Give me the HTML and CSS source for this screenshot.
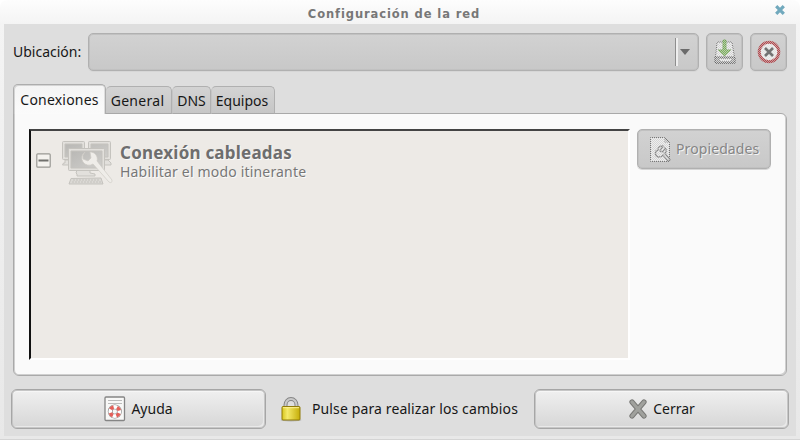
FILE: index.html
```html
<!DOCTYPE html>
<html lang="es">
<head>
<meta charset="utf-8">
<title>Configuración de la red</title>
<link rel="stylesheet" href="styles.css">
</head>
<body>
<div class="window">
  <header class="titlebar">
    <h1>Configuración de la red</h1>
    <svg class="close" width="12" height="12" viewBox="0 0 12 12"><path d="M2.2 2.2 9.8 9.8M9.8 2.2 2.2 9.8" stroke="#71a9bd" stroke-width="3.2"/></svg>
  </header>
  <main class="content">
    <div class="location">
      <label class="location-label">Ubicación:</label>
      <div class="combo"><span class="combo-sep"></span><span class="arrow"></span></div>
      <button class="tool">
        <svg width="24" height="28" viewBox="0 0 24 28">
          <defs>
            <pattern id="dots" width="2" height="2" patternUnits="userSpaceOnUse"><path d="M0 0h1v1H0zM1 1h1v1H1z" fill="#fff"/></pattern>
            <mask id="dither" maskUnits="userSpaceOnUse" x="0" y="0" width="30" height="30"><path d="M0 0h30v30H0z" fill="url(#dots)"/></mask>
            <mask id="dither-soft" maskUnits="userSpaceOnUse" x="0" y="0" width="30" height="30"><path d="M0 0h30v30H0z" fill="#fff" opacity=".35"/><path d="M0 0h30v30H0z" fill="url(#dots)"/></mask>
          </defs>
          <path d="M3 4h17l2 21H2z" fill="#ddd" opacity=".5"/>
          <g mask="url(#dither)">
            <path d="M4 4h15l2.500 15v6h-19v-6z" fill="#eee" stroke="#777"/>
            <path d="M2 19h20v6H2z" fill="#999" stroke="#555"/><path d="M7 22h11" stroke="#eee" stroke-width="2"/>
          </g>
          <g mask="url(#dither-soft)"><path d="M10 2h3v10h5l-6.500 6L5 12h5z" fill="#7fb45e" stroke="#6da14f"/></g>
        </svg>
      </button>
      <button class="tool">
        <svg width="26" height="26" viewBox="0 0 26 26">
          <circle cx="13" cy="13" r="9" fill="#ddd"/>
          <g mask="url(#dither-soft)"><circle cx="13" cy="13" r="9.800" fill="#eee" stroke="#b5484d" stroke-width="3"/></g>
          <path d="m9 9 8 8m0-8-8 8" stroke="#737373" stroke-width="2.600"/>
        </svg>
      </button>
    </div>
    <nav class="tabs">
      <span class="tab active"><b>Conexiones</b></span><span class="tab general"><b>General</b></span><span class="tab dns"><b>DNS</b></span><span class="tab equipos"><b>Equipos</b></span>
    </nav>
    <section class="panel">
      <div class="list">
        <svg class="expander" width="15" height="15" viewBox="0 0 15 15"><rect x=".8" y=".8" width="13.4" height="13.4" rx="1" fill="#f4f2ee" stroke="#999893" stroke-width="1.2"/><path d="M2.500 7.500h10" stroke="#70706d" stroke-width="2.200"/></svg>
        <svg class="network" width="52" height="47" viewBox="0 0 52 47">
          <defs><linearGradient id="screen" x1="0" y1="0" x2="1" y2="1"><stop stop-color="#b9b8b5"/><stop offset="1" stop-color="#cfcecb"/></linearGradient></defs>
          <g fill="#e2e0dc" stroke="#c5c3be">
            <rect x="1.500" y="1.500" width="22" height="18" rx="1"/><rect x="27.500" y="1.500" width="22" height="18" rx="1"/>
            <path d="M4 4h17v13H4zM30 4h17v13H30z" fill="url(#screen)"/>
            <path d="M4 20h6v5H1.500l1-2H4zM43 20h4l3 3v2h-7z"/>
            <path d="M16 30h13v3l5 1v2H16v-2l-1-1z"/>
            <rect x="7.500" y="8.500" width="36" height="22" rx="1"/><path d="M10 11h31v17H10z" fill="url(#screen)"/>
            <path d="m10 38.500 30-.5 2 6H8z" fill="#dbd9d5"/><path d="M12 40h27M11 42h29" stroke-dasharray="2 1"/>
          </g>
          <path d="M24 12a7 7 0 0 0 8 12L48 42q3 2 3-2L36 21a7 7 0 0 0-7-9l1 6-3 3-5-2a7 7 0 0 1 2-7z" fill="#efede9" stroke="#cecbc6" stroke-width=".7"/>
        </svg>
        <div class="item">
          <strong>Conexión cableadas</strong>
          <span>Habilitar el modo itinerante</span>
        </div>
      </div>
      <button class="properties">
        <svg width="23" height="27" viewBox="0 0 23 27">
          <path d="M2 2h14l4 4v19H2z" fill="#ddd" opacity=".5"/>
          <g mask="url(#dither)"><path d="M1.500 1.500h14l5 5v19h-19z" fill="#eee" stroke="#777"/><path d="M16 1v5h5" stroke="#888" fill="none"/></g>
          <g mask="url(#dither-soft)" fill="none" stroke="#888" stroke-width="1.400"><path d="M14 10c-4 0-5 2-5 4-4 1-3 7 1 7 3 0 4-2 4-2l5 6 2-1-5-7c2-2 1-4 0-5l-2 4-3-1z"/></g>
        </svg>
        <span>Propiedades</span>
      </button>
    </section>
    <footer class="actions">
      <button class="action">
        <svg width="22" height="26" viewBox="0 0 22 26"><rect x="1" y="1" width="19.500" height="23.500" rx="1" fill="#f8f8f7" stroke="#858585" stroke-width="1.300"/><path d="M4 4.500h14M4 7.500h14" stroke="#bbb"/><circle cx="10.800" cy="15.500" r="4.600" fill="none" stroke="#888" stroke-width="4.800"/><circle cx="10.800" cy="15.500" r="4.600" fill="none" stroke="#fff" stroke-width="3.600"/><circle cx="10.800" cy="15.500" r="4.600" fill="none" stroke="#e3605a" stroke-width="3.600" stroke-dasharray="3.613" stroke-dashoffset="-1.806"/></svg>
        <span class="help-text">Ayuda</span>
      </button>
      <div class="unlock">
        <svg width="22" height="25" viewBox="0 0 22 25"><defs><linearGradient id="gold"><stop stop-color="#d7c51d"/><stop offset=".3" stop-color="#f5ea6a"/><stop offset="1" stop-color="#c5ad08"/></linearGradient></defs><path d="M5.500 12V8a5.500 6 0 0 1 11 0v4" fill="none" stroke="#858585" stroke-width="4"/><path d="M5.500 12V8a5.500 6 0 0 1 11 0v4" fill="none" stroke="#c9c9c9" stroke-width="2"/><ellipse cx="11" cy="23" rx="10.500" ry="1.500" fill="#888" opacity=".5"/><rect x="2" y="9.500" width="18" height="13.500" rx="1" fill="url(#gold)" stroke="#907b09"/><path d="M3 10.700h16" stroke="#fff395"/></svg>
        <span class="unlock-text">Pulse para realizar los cambios</span>
      </div>
      <button class="action">
        <svg width="20" height="22" viewBox="0 0 20 22"><path d="m4 4 12 14M16 4 4 18" stroke="#777774" stroke-width="5.200" stroke-linecap="round"/><path d="m4 4 12 14M16 4 4 18" stroke="#a0a19d" stroke-width="3.400" stroke-linecap="round"/></svg>
        <span class="close-text">Cerrar</span>
      </button>
    </footer>
  </main>
</div>
</body>
</html>
```

FILE: styles.css
```css
* { box-sizing: border-box; }
body { margin: 0; background: #fff; font: 14px/18px "Noto Sans", sans-serif; color: #171717; }
button { font: inherit; color: inherit; padding: 0; margin: 0; }
svg { display: block; flex: none; }
span, strong, label, b, h1 { white-space: nowrap; }
.window { width: 800px; height: 440px; padding: 0 4px 3px; background: linear-gradient(#fdfdfd, #f4f4f4 24px, #e8e8e8); border-bottom: 1px solid #d4d4d4; border-radius: 7px 7px 0 0; overflow: hidden; }
.titlebar { height: 24px; display: grid; grid-template-columns: 18px 1fr 18px; align-items: center; }
h1 { grid-column: 2; margin: 3px 0 0; text-align: center; font: bold 11.5px/16px "DejaVu Sans", sans-serif; letter-spacing: .9px; color: #777; padding-right: 12px; }
.close { margin: -4px 0 0 -4px; }
.content { height: 412px; padding: 9px 8px 7px; background: #dedede; display: flex; flex-direction: column; }
.location { height: 38px; display: flex; }
.location-label { width: 76px; padding: 10px 0 0 1px; }
.combo, .tool, .properties { border: 1px solid #b0b0b0; border-radius: 5px; background: linear-gradient(#d2d2d2, #c8c8c8); box-shadow: inset 0 0 0 1px #c1c1c1, 0 1px #d6d6d6; }
.combo { width: 611px; display: flex; align-items: center; justify-content: flex-end; padding-right: 8px; }
.combo-sep { width: 3px; height: 28px; border-left: 1px solid #8e8e8e; border-right: 2px solid #eee; margin-right: 2px; }
.arrow { border: 5px solid transparent; border-top: 6px solid #6b6b6b; border-bottom: 0; }
.tool { width: 37px; margin-left: 7px; display: flex; align-items: center; justify-content: center; }
.tabs { height: 30px; margin: 13px 0 -1px 1px; display: flex; align-items: flex-end; position: relative; z-index: 1; }
.tab { height: 28px; border: 1px solid #b0b0b0; border-left-color: #c4c4c4; border-bottom-color: #a8a8a8; border-radius: 5px 5px 0 0; background: linear-gradient(#d3d3d3, #c6c6c6); display: flex; align-items: center; justify-content: center; padding-top: 2px; }
.tab b { font-weight: normal; }
.active { width: 93px; height: 30px; background: linear-gradient(#f4f4f4, #fbfbfb); border: 1px solid #adadad; border-bottom: 0; padding: 1px 0 0; letter-spacing: .2px; box-shadow: inset 1px 1px #d4d4d4, inset -1px 0 #ddd; }
.general { width: 66px; border-left: 0; letter-spacing: .3px; padding-right: 2px; }
.dns { width: 39px; }
.equipos { width: 64px; padding-right: 2px; }
.panel { height: 263px; margin: 0 1px; border: 1px solid #a9a9a9; border-radius: 0 6px 6px 6px; background: #fafafa; box-shadow: inset 1px 0 #cfcfcf, inset -1px -1px #cfcfcf; padding: 15px 14px 15px 15px; display: flex; }
.list { width: 601px; height: 231px; border: solid; border-width: 2px; border-color: #444 #fff #fff #111; background: #edeae6; display: flex; padding: 7px 0 0 5px; }
.expander { margin-top: 15px; }
.network { margin: 2px 0 0 10px; }
.item { margin: 5px 0 0 7px; display: flex; flex-direction: column; color: #777; text-shadow: 1px 1px #fafafa; }
.item strong { font-size: 17px; line-height: 20px; letter-spacing: .22px; color: #6e6e6e; }
.item span { line-height: 17px; letter-spacing: .18px; }
.properties { width: 134px; height: 40px; margin-left: 7px; display: flex; align-items: center; padding-left: 11px; gap: 4px; color: #858585; text-shadow: 1px 1px #f4f4f4; letter-spacing: .1px; }
.actions { height: 40px; margin: 13px -1px 0; display: flex; }
.action { width: 255px; border: 1px solid #a6a6a6; border-radius: 6px; background: linear-gradient(#f0f0f0, #d6d6d6); box-shadow: inset 0 0 0 1px #c6c6c6, inset 0 2px #f6f6f6, inset -2px -2px #e9e9e9; display: flex; align-items: center; justify-content: center; gap: 5px; }
.unlock { flex: 1; display: flex; align-items: center; padding-left: 14px; gap: 10px; letter-spacing: .12px; }
```
